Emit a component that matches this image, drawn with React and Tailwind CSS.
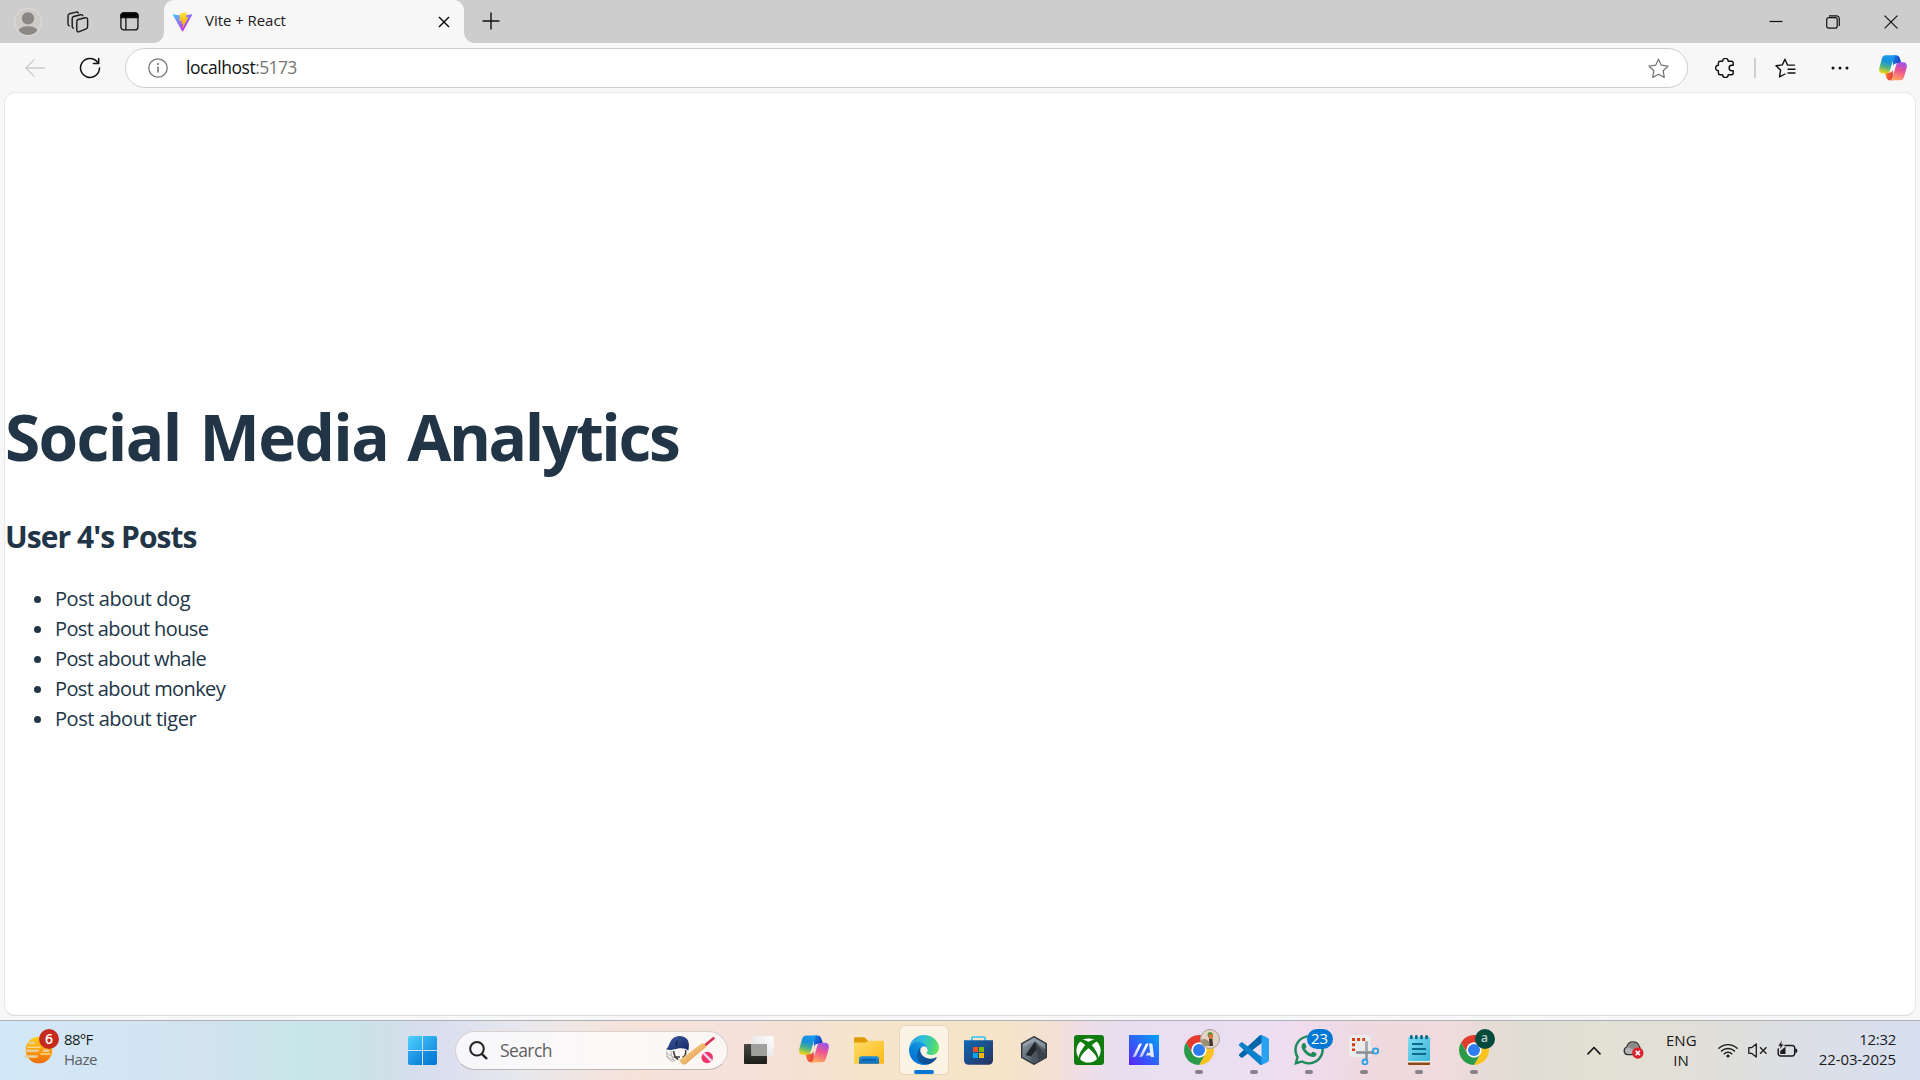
import React from 'react';
import { FaXbox, FaWhatsapp } from 'react-icons/fa';

/* ---------- shared logos ---------- */

function CopilotLogo({ id, className }) {
  const loop =
    'M7.200.4h11.600c-1.900.3-2.700 1.800-3.300 3.800l-3.700 12.200c-.8 2.500-2 3.400-4.200 3.400H4.200C1 19.800-.5 17.600.3 14L2.900 4.600C3.700 1.600 4.900.4 7.200.4z';
  return (
    <svg viewBox="0 0 30 28" className={className}>
      <defs>
        <linearGradient id={id + 'a'} x1="0.55" y1="0" x2="0.3" y2="1">
          <stop offset="0" stopColor="#1b9bee" />
          <stop offset="0.35" stopColor="#1690d8" />
          <stop offset="0.65" stopColor="#4db386" />
          <stop offset="1" stopColor="#f5d80c" />
        </linearGradient>
        <linearGradient id={id + 'b'} x1="0.3" y1="1" x2="0.6" y2="0">
          <stop offset="0" stopColor="#9a55ee" />
          <stop offset="0.45" stopColor="#ee5390" />
          <stop offset="1" stopColor="#ffa660" />
        </linearGradient>
        <linearGradient id={id + 'c'} x1="0" y1="0" x2="1" y2="0.6">
          <stop offset="0" stopColor="#1a86ee" />
          <stop offset="1" stopColor="#1238b8" />
        </linearGradient>
        <linearGradient id={id + 'd'} x1="0" y1="0" x2="1" y2="0.4">
          <stop offset="0" stopColor="#f8842c" />
          <stop offset="1" stopColor="#e8403f" />
        </linearGradient>
      </defs>
      <path d="M15 .4h3.200c2.500 0 3.700 1.300 4.400 3.900l1.400 4.500h-4.600c-2.600 0-3.600.9-4.400 3z" fill={`url(#${id}c)`} />
      <path d="M15 27.200h-3c-2.500 0-3.600-1.400-4.300-3.900l-1.300-4.200h4c2.600 0 3.600-1.200 4.300-3.200z" fill={`url(#${id}d)`} />
      <path d={loop} fill={`url(#${id}a)`} />
      <path transform="rotate(180 15 13.800)" d={loop} fill={`url(#${id}b)`} style={undefined} />
    </svg>
  );
}

function ViteLogo() {
  return (
    <svg viewBox="0 0 410 404" className="h-[20px] w-[21px]">
      <defs>
        <linearGradient id="va" x1="6" y1="33" x2="235" y2="344" gradientUnits="userSpaceOnUse">
          <stop stopColor="#41D1FF" />
          <stop offset="1" stopColor="#BD34FE" />
        </linearGradient>
        <linearGradient id="vb" x1="194.700" y1="8.800" x2="236" y2="293" gradientUnits="userSpaceOnUse">
          <stop stopColor="#FFEA83" />
          <stop offset="0.083" stopColor="#FFDD35" />
          <stop offset="1" stopColor="#FFA800" />
        </linearGradient>
      </defs>
      <path fill="url(#va)" d="M399.641 59.5246L215.643 388.545C211.844 395.338 202.084 395.378 198.228 388.618L10.5817 59.5563C6.38087 52.1896 12.6802 43.2665 21.0281 44.7586L205.223 77.6824C206.398 77.8924 207.601 77.8904 208.776 77.6763L389.119 44.8058C397.439 43.2894 403.768 52.1434 399.641 59.5246Z" />
      <path fill="url(#vb)" d="M292.965 1.5744L156.801 28.2552C154.563 28.6937 152.906 30.5903 152.771 32.8664L144.395 174.33C144.198 177.662 147.258 180.248 150.51 179.498L188.42 170.749C191.967 169.931 195.172 173.055 194.443 176.622L183.18 231.775C182.422 235.487 185.907 238.661 189.532 237.56L212.947 230.446C216.577 229.344 220.065 232.527 219.297 236.242L201.398 322.875C200.278 328.294 207.486 331.249 210.492 326.603L212.5 323.5L323.454 102.072C325.312 98.3645 322.108 94.137 318.036 94.9228L279.014 102.454C275.347 103.161 272.227 99.746 273.262 96.1583L298.731 7.86689C299.767 4.27314 296.636 .855181 292.965 1.5744Z" />
    </svg>
  );
}

/* ---------- browser chrome ---------- */

function TabStrip() {
  return (
    <div className="flex h-[43px] w-full items-center bg-[#cdcdcd]">
      <div className="ml-[14px] size-[28px] shrink-0 overflow-hidden rounded-full border border-[#e2dfdb] bg-[#cfcbc6]">
        <svg viewBox="0 0 27 27" className="-ml-px -mt-px size-[28px]">
          <circle cx="13.500" cy="10" r="6" fill="#8b8784" />
          <path d="M4.500 21.500c2.200-5.200 15.800-5.200 18 0-1.600 3.300-5.200 5-9 5s-7.400-1.700-9-5z" fill="#8b8784" />
        </svg>
      </div>
      <svg viewBox="0 0 22 22" className="ml-[25px] size-[22px] shrink-0" fill="none" stroke="#1a1a1a" strokeWidth="1.400" strokeLinejoin="round" strokeLinecap="round">
        <path d="M9.800 10.400c0-1 .5-1.600 1.400-1.900l7-1.800c1.400-.3 2.400.4 2.400 1.800v7.300c0 .9-.5 1.600-1.400 2l-6.900 2.900c-1.400.5-2.500-.2-2.500-1.600z" />
        <path d="M6.400 17.200c-.8-.3-1.200-.9-1.200-1.700V7.400c0-1 .5-1.600 1.400-1.900l7-1.800c1-.2 1.800.1 2.200.9" />
        <path d="M2.200 14.800c-.8-.3-1.200-.9-1.200-1.700V4.700c0-1 .5-1.600 1.400-1.900l6.700-1.700c1-.2 1.800.1 2.200.9" />
      </svg>
      <svg viewBox="0 0 19 19" className="ml-[31px] size-[19px] shrink-0" fill="none" stroke="#111" strokeWidth="1.300">
        <rect x="0.900" y="0.900" width="17" height="17" rx="3" />
        <path d="M.9 5.500V3.500a2.600 2.600 0 0 1 2.600-2.600h12a2.600 2.600 0 0 1 2.600 2.600v2z" fill="#050505" />
        <path d="M5.900 5.500V18" />
      </svg>

      <div className="relative ml-[25px] flex h-full w-[300px] shrink-0 items-center rounded-t-[10px] bg-[#f7f7f7]">
        <span className="absolute -left-[10px] bottom-0 size-[10px] bg-[radial-gradient(circle_at_0_0,transparent_9.5px,#f7f7f7_10px)]" />
        <span className="absolute -right-[10px] bottom-0 size-[10px] bg-[radial-gradient(circle_at_100%_0,transparent_9.5px,#f7f7f7_10px)]" />
        <div className="ml-[8px]"><ViteLogo /></div>
        <span className="-mt-[3px] ml-[12px] text-[15px] leading-[20px] tracking-[-0.05px] text-[#1b1b1b]">Vite + React</span>
        <svg viewBox="0 0 12 12" className="ml-auto mr-[14px] size-[12px]" stroke="#111" strokeWidth="1.500">
          <path d="M1 1l10 10M11 1L1 11" />
        </svg>
      </div>
      <svg viewBox="0 0 18 18" className="-mt-[1px] ml-[18px] size-[18px] shrink-0" stroke="#111" strokeWidth="1.400">
        <path d="M.5 9h17M9 .5v17" />
      </svg>

      <div className="ml-auto mr-[22px] flex items-center">
        <svg viewBox="0 0 14 14" className="size-[14px]" stroke="#111" strokeWidth="1.200">
          <path d="M.5 6.500h13" />
        </svg>
        <svg viewBox="0 0 14 14" className="ml-[43px] size-[14px]" fill="none" stroke="#111" strokeWidth="1.200">
          <rect x="0.700" y="2.700" width="10.500" height="10.500" rx="2" />
          <path d="M3 .9h7.400a2.900 2.900 0 0 1 2.900 2.900V11" />
        </svg>
        <svg viewBox="0 0 14 14" className="ml-[44px] size-[14px]" stroke="#111" strokeWidth="1.200">
          <path d="M.6.600l12.800 12.800M13.400.6L.6 13.400" />
        </svg>
      </div>
    </div>
  );
}

const STAR = 'M10 1.200l2.700 5.700 6.300.9-4.600 4.300 1.100 6.300L10 15.500l-5.500 2.900 1.100-6.300L1 7.800l6.300-.9z';

function Toolbar() {
  return (
    <div className="flex h-[49px] w-full items-center bg-[#f7f7f7] pt-px">
      <svg viewBox="0 0 20 18" className="ml-[25px] h-[18px] w-[20px] shrink-0" fill="none" stroke="#cbcbcb" strokeWidth="1.300" strokeLinecap="round" strokeLinejoin="round">
        <path d="M19.500 9H.8M9.300.6L.8 9l8.500 8.400" />
      </svg>
      <svg viewBox="0 0 22 22" className="ml-[34px] size-[22px] shrink-0" fill="none" stroke="#111" strokeWidth="1.500" strokeLinecap="round" strokeLinejoin="round">
        <path d="M18.600 5.200A9.500 9.500 0 1 0 20.500 11" />
        <path d="M19.700 1.400v5h-5.200" />
      </svg>
      <div className="ml-[24px] flex h-[40px] w-[1563px] shrink-0 items-center rounded-full border border-[#cfcfcf] bg-white">
        <svg viewBox="0 0 20 20" className="ml-[22px] size-[20px]" fill="none" stroke="#767676" strokeWidth="1.300">
          <circle cx="10" cy="10" r="9.200" />
          <path d="M10 8.600v5.800" strokeWidth="1.600" />
          <circle cx="10" cy="6" r="1.100" fill="#767676" stroke="none" />
        </svg>
        <span className="-mt-[3px] ml-[18px] text-[17.5px] leading-[24px] text-[#767676]">
          <span className="tracking-[-0.45px] text-[#111]">localhost</span>
          <span className="tracking-[-0.65px]">:5173</span>
        </span>
        <svg viewBox="0 0 20 20" className="ml-auto mr-[18px] size-[21px]" fill="none" stroke="#767676" strokeWidth="1.200" strokeLinejoin="round">
          <path d={STAR} />
        </svg>
      </div>
      <svg viewBox="0 0 20 20" className="ml-[27px] size-[20px] shrink-0" fill="none" stroke="#111" strokeWidth="1.400" strokeLinejoin="round">
        <path d="M3.400 5Q3.400 3.200 5.200 3.200H7.600A2.800 2.800 0 0 1 13.200 3.200H16.400Q18.200 3.200 18.200 5V7.300H16.800A2.700 2.700 0 0 0 16.800 12.700H18.200V15Q18.200 16.800 16.400 16.800H13.200A2.800 2.800 0 0 1 7.600 16.800H5.200Q3.400 16.800 3.400 15V12.800A2.800 2.800 0 0 1 3.400 7.200Z" />
      </svg>
      <span className="ml-[19px] h-[20px] w-[2px] shrink-0 bg-[#cfcfcf]" />
      <svg viewBox="0 0 21 20" className="ml-[19px] h-[20px] w-[21px] shrink-0" fill="none" stroke="#111" strokeWidth="1.400" strokeLinejoin="round" strokeLinecap="round">
        <path d="M12.500 7.100L10 1.200 7.300 6.900 1 7.800l4.600 4.300-1.100 6.700L10 16M12.500 7.100h7" />
        <path d="M13 11.200h7M13 15h7" />
      </svg>
      <svg viewBox="0 0 18 4" className="ml-[35px] h-[4px] w-[18px] shrink-0" fill="#111">
        <circle cx="2" cy="2" r="1.500" />
        <circle cx="9" cy="2" r="1.500" />
        <circle cx="16" cy="2" r="1.500" />
      </svg>
      <CopilotLogo id="cpTop" className="ml-[30px] h-[26px] w-[28px] shrink-0" />
    </div>
  );
}

/* ---------- page ---------- */

const posts = [
  ['Post about dog', 'tracking-[-0.42px]'],
  ['Post about house', 'tracking-[-0.62px]'],
  ['Post about whale', 'tracking-[-0.62px]'],
  ['Post about monkey', 'tracking-[-0.61px]'],
  ['Post about tiger', 'tracking-[-0.45px]'],
];

function Page() {
  return (
    <div className="h-[928px] w-full bg-[#f7f7f7] px-[4px] pb-[4px]">
      <main className="h-full rounded-[11px] border border-[#e8e8e8] border-b-[#dcdcdc] bg-[#fefefe] pt-[309px] text-[#213547]">
        <h1 className="h-[70px] whitespace-nowrap text-[64px] font-bold leading-[70px] tracking-[-1.65px] [word-spacing:4px]">
          Social Media <span className="tracking-[-2.4px]">Analytics</span>
        </h1>
        <h2 className="mt-[42px] whitespace-nowrap text-[30px] font-bold leading-[45px] tracking-[-0.95px]">User 4's Posts</h2>
        <ul className="mt-[25px]">
          {posts.map(([text, tracking]) => (
            <li key={text} className="flex h-[30px] items-center text-[20px] leading-[30px]">
              <span className="ml-[29px] mr-[14px] size-[7px] rounded-full bg-[#213547]" />
              <span className={tracking}>{text}</span>
            </li>
          ))}
        </ul>
      </main>
    </div>
  );
}

/* ---------- taskbar ---------- */

function WeatherIcon() {
  return (
    <svg viewBox="0 0 30 28" className="h-[28px] w-[30px]">
      <defs>
        <linearGradient id="sun" x1="0" y1="0" x2="0" y2="1">
          <stop offset="0" stopColor="#fdd015" />
          <stop offset="0.500" stopColor="#fb9f0f" />
          <stop offset="1" stopColor="#ee6a08" />
        </linearGradient>
      </defs>
      <circle cx="15" cy="14" r="13.300" fill="url(#sun)" />
      <g stroke="#e6cf9c" strokeWidth="2.600" strokeLinecap="round">
        <path d="M5.500 7h4.500M3.500 14.800h10M20 14.800h4M1.500 20.500h11" />
      </g>
      <g stroke="#f7d98f" strokeWidth="1.400" strokeLinecap="round">
        <path d="M4 11.300h12M17 18h9" />
      </g>
    </svg>
  );
}

function StartIcon() {
  return (
    <div className="grid size-[29px] shrink-0 grid-cols-2 grid-rows-2 gap-[1px] overflow-hidden rounded-[2px]">
      <span className="bg-gradient-to-br from-[#4fd0fb] to-[#27a9ee]" />
      <span className="bg-gradient-to-br from-[#35b7f3] to-[#1591e2]" />
      <span className="bg-gradient-to-br from-[#2ba7ee] to-[#0b80d8]" />
      <span className="bg-gradient-to-br from-[#1791e3] to-[#0676d2]" />
    </div>
  );
}

function CricketArt() {
  return (
    <svg viewBox="0 0 50 30" className="h-[30px] w-[50px]">
      <defs>
        <linearGradient id="helm" x1="0" y1="0" x2="1" y2="1">
          <stop offset="0" stopColor="#3d5da8" />
          <stop offset="1" stopColor="#16265c" />
        </linearGradient>
        <linearGradient id="bat" x1="0" y1="0" x2="1" y2="1">
          <stop offset="0.200" stopColor="#f9cf8c" />
          <stop offset="1" stopColor="#d98d3e" />
        </linearGradient>
      </defs>
      <g fill="none" stroke="#a9a7a8" strokeWidth="0.900">
        <path d="M2 16c-1 5 1 9 6 10.500M2 18.500l9 5M1.500 21.500l9 4.500M6 16c0 4 1.500 8 4 10M9 16c.5 4 2 6.500 5 9" />
      </g>
      <path d="M8.500 16c.5 4 2 7 4.500 8.500M20.500 15c1 4-.5 6-3 7.500M9 22h6" stroke="#3a3a3f" strokeWidth="1.500" fill="none" />
      <path d="M1 14.300C4.300 12 4 7 7.500 3.700c4.200-3.900 12-3.500 14.800.8 2 3 1.900 7 1 11.300-2.800-2.600-6.800-2.900-11.300-2-4 .9-7.500 2-11 .5z" fill="url(#helm)" />
      <path d="M12.500 6.200c-1.500 1-1.500 3-.5 4.500" stroke="#0f1a3c" strokeWidth="1.100" fill="none" />
      <path d="M14.300 25.200L36.500 8.600c1.500-1 5.100.8 5.300 2.800L21 29c-2 1-4.200.6-5.200-1.200z" fill="url(#bat)" />
      <path d="M41 9.500l7.500-6.300" stroke="#d8324f" strokeWidth="2.500" strokeLinecap="round" />
      <circle cx="42.200" cy="22.500" r="5.700" fill="#ee3568" />
      <path d="M37.800 19l7.700 8 2-1.800-8-7.800z" fill="#ead7f7" />
    </svg>
  );
}

function TaskViewIcon() {
  return (
    <svg viewBox="0 0 30 28" className="h-[28px] w-[30px]">
      <defs>
        <linearGradient id="tv1" x1="0" y1="0" x2="0" y2="1">
          <stop offset="0" stopColor="#484846" />
          <stop offset="1" stopColor="#1c1c1b" />
        </linearGradient>
        <linearGradient id="tv2" x1="1" y1="0" x2="0" y2="1">
          <stop offset="0" stopColor="#fff" />
          <stop offset="1" stopColor="#dadada" />
        </linearGradient>
      </defs>
      <rect x="0" y="8" width="23" height="20" rx="0.800" fill="url(#tv1)" />
      <rect x="7.500" y="0.300" width="22.300" height="19.700" rx="1.200" fill="url(#tv2)" />
      <rect x="7.500" y="8" width="15.500" height="12" fill="#9f9f9d" />
    </svg>
  );
}

function FolderIcon() {
  return (
    <svg viewBox="0 0 30 27" className="h-[27px] w-[30px]">
      <defs>
        <linearGradient id="fo" x1="0" y1="0" x2="1" y2="1">
          <stop offset="0" stopColor="#ffdc69" />
          <stop offset="1" stopColor="#fdb916" />
        </linearGradient>
        <linearGradient id="fob" x1="0" y1="0" x2="0" y2="1">
          <stop offset="0" stopColor="#1c8fe0" />
          <stop offset="1" stopColor="#0f6cbd" />
        </linearGradient>
      </defs>
      <path d="M0 1.800C0 1 .6.300 1.500.300h8c.8 0 1.300.2 1.900.8L14 3.500v4H0z" fill="#df9a06" />
      <path d="M0 5.600h10.200c1 0 1.600-.2 2.300-.9l1.100-1H29c.6 0 1 .4 1 1v21c0 .6-.4 1-1 1H1c-.6 0-1-.4-1-1z" fill="url(#fo)" />
      <path d="M5 26.700v-4.500A2.900 2.900 0 0 1 7.900 19.300h14.200A2.900 2.900 0 0 1 25 22.200v4.500z" fill="url(#fob)" />
      <path d="M8 22.800h14" stroke="#0b4f92" strokeWidth="1.200" />
    </svg>
  );
}

function EdgeIcon() {
  return (
    <svg viewBox="0 0 256 256" className="size-[30px]">
      <defs>
        <linearGradient id="ea" x1="63" y1="178" x2="241" y2="178" gradientUnits="userSpaceOnUse">
          <stop offset="0" stopColor="#0c59a4" />
          <stop offset="1" stopColor="#114a8b" />
        </linearGradient>
        <linearGradient id="eb" x1="157" y1="95" x2="46" y2="216" gradientUnits="userSpaceOnUse">
          <stop offset="0" stopColor="#1b9de2" />
          <stop offset="0.200" stopColor="#1595df" />
          <stop offset="0.700" stopColor="#0680d7" />
          <stop offset="1" stopColor="#0078d4" />
        </linearGradient>
        <linearGradient id="ec" x1="10" y1="60" x2="250" y2="120" gradientUnits="userSpaceOnUse">
          <stop offset="0" stopColor="#2f9fe2" />
          <stop offset="0.400" stopColor="#2fc0d8" />
          <stop offset="0.700" stopColor="#3fcf9a" />
          <stop offset="1" stopColor="#66e45a" />
        </linearGradient>
      </defs>
      <path fill="url(#ea)" d="M231 190.500c-3.400 1.800-6.900 3.400-10.500 4.700a101.600 101.600 0 0 1-35.900 6.400c-47.300 0-88.500-32.500-88.500-74.300a31.500 31.500 0 0 1 16.400-27.300c-42.800 1.800-53.800 46.400-53.800 72.500 0 74 68.100 81.400 82.800 81.400 7.900 0 19.800-2.300 27-4.600l1.300-.4a128.300 128.300 0 0 0 66.600-52.800 4 4 0 0 0-5.400-5.600z" />
      <path fill="url(#eb)" d="M105.700 241.400A79.200 79.200 0 0 1 83 220.100a80.700 80.700 0 0 1 29.500-120c3.200-1.500 8.500-4.100 15.600-4a32.400 32.400 0 0 1 25.700 13 31.900 31.900 0 0 1 6.300 18.700c0-.2 24.500-79.600-80-79.600-43.900 0-80 41.700-80 78.200a130.200 130.200 0 0 0 12.100 56 128 128 0 0 0 156.400 67 75.500 75.500 0 0 1-62.800-8z" />
      <path fill="url(#ec)" d="M152.300 148.900c-.9 1-3.400 2.500-3.400 5.600 0 2.600 1.700 5.200 4.800 7.300 14.300 10 41.400 8.600 41.500 8.600a59.600 59.600 0 0 0 30.300-8.300 61.400 61.400 0 0 0 30.400-52.900c.3-22.400-8-37.300-11.300-43.900C223.500 23.900 177.700 0 128 0A128 128 0 0 0 0 126.200c.5-36.500 36.800-66 80-66 3.500 0 23.500.3 42 10a72.600 72.600 0 0 1 30.900 29.300c6.100 10.600 7.200 24.100 7.200 29.500s-2.700 13.300-7.800 19.900z" />
    </svg>
  );
}

function StoreIcon() {
  return (
    <svg viewBox="0 0 29 29" className="size-[29px]">
      <defs>
        <linearGradient id="st" x1="0" y1="0" x2="1" y2="1">
          <stop offset="0" stopColor="#0f6ab4" />
          <stop offset="1" stopColor="#27305f" />
        </linearGradient>
      </defs>
      <path d="M7.900 5V2.200c0-.7.400-1.200 1.200-1.200h10.800c.8 0 1.200.5 1.200 1.200V5" fill="none" stroke="#2fc4f4" strokeWidth="1.700" />
      <path d="M0 4.200h29v20a4.600 4.600 0 0 1-4.600 4.600H4.600A4.600 4.600 0 0 1 0 24.200z" fill="url(#st)" />
      <rect x="9" y="11" width="5" height="5" fill="#f25022" />
      <rect x="15" y="11" width="5" height="5" fill="#7fba00" />
      <rect x="9" y="17" width="5" height="5" fill="#00a4ef" />
      <rect x="15" y="17" width="5" height="5" fill="#ffb900" />
    </svg>
  );
}

function ArmouryIcon() {
  return (
    <svg viewBox="0 0 26 29" className="h-[29px] w-[26px]">
      <defs>
        <linearGradient id="ar" x1="0" y1="0" x2="1" y2="1">
          <stop offset="0" stopColor="#8595a2" />
          <stop offset="0.500" stopColor="#66727d" />
          <stop offset="1" stopColor="#2c3238" />
        </linearGradient>
      </defs>
      <path d="M13 .7l12.300 7v13.600L13 28.300.7 21.300V7.700z" fill="url(#ar)" stroke="#30373e" strokeWidth="1.400" />
      <path d="M14 5.500L4.500 19l5.500 1.500 5.500-6.500 2 8.500 6-4z" fill="#22262b" />
      <path d="M10 20.500l5.500-6.500 1.700 8-4 5z" fill="#4d565f" />
      <path d="M13 1.800L24.200 8v5L14 5.500 2 11V8z" fill="#b7c2cb" opacity="0.450" />
      <path d="M14 5.500l9.500 13 .8 2L17.500 24z" fill="#3a4148" />
    </svg>
  );
}

function XboxIcon() {
  return (
    <div className="flex size-[30px] items-center justify-center rounded-[3px] bg-[#107c10]">
      <FaXbox className="size-[25px] text-white" />
    </div>
  );
}

function MyAsusIcon() {
  return (
    <svg viewBox="0 0 30 30" className="size-[30px]">
      <defs>
        <linearGradient id="as" x1="0" y1="1" x2="1" y2="0">
          <stop offset="0" stopColor="#5a22f5" />
          <stop offset="0.500" stopColor="#2f63fb" />
          <stop offset="1" stopColor="#00a4fb" />
        </linearGradient>
        <linearGradient id="asw" x1="0" y1="1" x2="1" y2="0">
          <stop offset="0" stopColor="#a9b4fb" />
          <stop offset="0.700" stopColor="#fff" />
        </linearGradient>
      </defs>
      <rect width="30" height="30" fill="url(#as)" />
      <path d="M3.500 22L9.800 9.500a2 2 0 0 1 1.700-1h1.500L7 21a2 2 0 0 1-1.700 1z" fill="url(#asw)" />
      <path d="M10.200 22L16.500 9.500a2 2 0 0 1 1.700-1h1.500L13.700 21A2 2 0 0 1 12 22z" fill="url(#asw)" />
      <path d="M20 8.500h2c1 0 1.400.5 1.600 1.300L25 22h-3.200l-.2-1.500h-4.800l1.600-2.800h2.800l-.7-5z" fill="#e7ebfe" />
    </svg>
  );
}

function ChromeIcon() {
  return (
    <svg viewBox="0 0 48 48" className="size-[30px]">
      <path d="M24 12H44.780A24 24 0 0 0 3.220 12L13.600 30A12 12 0 0 1 24 12z" fill="#e33b2e" />
      <path d="M24 12H44.780A24 24 0 0 1 24 48L34.390 30A12 12 0 0 0 24 12z" fill="#fcc31e" />
      <path d="M34.390 30L24 48A24 24 0 0 1 3.220 12L13.600 30A12 12 0 0 0 34.390 30z" fill="#2a9b48" />
      <circle cx="24" cy="24" r="12" fill="#fff" />
      <circle cx="24" cy="24" r="9.600" fill="#2f7cf0" />
    </svg>
  );
}

function VsCodeIcon() {
  const arm =
    'M96.4614 10.7962L75.8569.875542C73.4719-.272773 70.6217.211611 68.75 2.08333L1.29858 63.5832C-.515693 65.2373-.513607 68.0937 1.30308 69.7452L6.81272 74.754C8.29793 76.1042 10.5347 76.2036 12.1338 74.9905L93.3609 13.3699C96.086 11.3026 100 13.2462 100 16.6667V16.4275C100 14.0265 98.6246 11.8378 96.4614 10.7962Z';
  return (
    <svg viewBox="0 0 100 100" className="size-[30px]">
      <path d={arm} fill="#0065a9" />
      <path d={arm} transform="matrix(1 0 0 -1 0 100)" fill="#0a7fca" />
      <path fill="#27a2f0" d="M75.8578 99.1263C73.4721 100.274 70.6219 99.7885 68.75 97.9166C71.0564 100.223 75 98.5895 75 95.3278V4.67213C75 1.41039 71.0564-.223106 68.75 2.08329C70.6219.211402 73.4721-.273666 75.8578.873633L96.4587 10.7807C98.6234 11.8217 100 14.0112 100 16.4132V83.5871C100 85.9891 98.6234 88.1786 96.4586 89.2196L75.8578 99.1263Z" />
    </svg>
  );
}

function SnipIcon() {
  return (
    <svg viewBox="0 0 30 30" className="size-[30px]">
      <rect x="0" y="0" width="22" height="22" rx="2" fill="#ebebeb" />
      <path d="M4.500 16V4.500H16" fill="none" stroke="#d83b12" strokeWidth="3" strokeDasharray="3 2.200" strokeDashoffset="0.500" />
      <path d="M7 17.500h17M17.500 6.500V24" stroke="#868b90" strokeWidth="2.400" />
      <path d="M17.500 6.500V17" stroke="#a9adb1" strokeWidth="2" />
      <circle cx="26.500" cy="16" r="2.700" fill="none" stroke="#2b9fe6" strokeWidth="1.800" />
      <circle cx="16" cy="27" r="2.500" fill="none" stroke="#2b9fe6" strokeWidth="1.800" />
    </svg>
  );
}

function NotepadIcon() {
  return (
    <svg viewBox="0 0 22 30" className="h-[30px] w-[22px]">
      <defs>
        <linearGradient id="np" x1="0" y1="0" x2="1" y2="1">
          <stop offset="0" stopColor="#7fdcf2" />
          <stop offset="1" stopColor="#39b5d8" />
        </linearGradient>
      </defs>
      <rect x="0" y="24" width="22" height="6" rx="1" fill="#8f4a12" />
      <rect x="0" y="24" width="22" height="3.500" fill="#f4efe8" />
      <rect x="0" y="2" width="22" height="24" rx="1" fill="url(#np)" />
      <g fill="#0f6280">
        <rect x="2" y="0" width="2.600" height="4.200" rx="1.200" />
        <rect x="7" y="0" width="2.600" height="4.200" rx="1.200" />
        <rect x="12.200" y="0" width="2.600" height="4.200" rx="1.200" />
        <rect x="17.300" y="0" width="2.600" height="4.200" rx="1.200" />
      </g>
      <path d="M4 9h11M4 14h14M4 19h14" stroke="#0c6a8c" strokeWidth="1.800" />
    </svg>
  );
}

function AppCell({ children, running, active }) {
  return (
    <div className="flex w-[55px] shrink-0 justify-center">
      <div
        className={
          active
            ? 'relative flex h-[48px] w-[48px] items-center justify-center rounded-[5px] bg-[#fcf3e5] shadow-[0_0_1px_1px_rgba(190,170,130,0.25)]'
            : 'relative flex h-[48px] w-[48px] items-center justify-center'
        }
      >
        {children}
        {running && <span className="absolute bottom-0 left-[20px] h-[4px] w-[8px] rounded-full bg-[#87828a]" />}
        {active && <span className="absolute bottom-0 left-[14px] h-[4px] w-[20px] rounded-full bg-[#0078d4]" />}
      </div>
    </div>
  );
}

function Taskbar() {
  return (
    <footer className="flex h-[60px] w-full items-center border-t border-[#aeb2b6] bg-[linear-gradient(90deg,#d3e8f8_0px,#d2e3ef_200px,#c8e6e9_300px,#c9e3e8_350px,#d0dfe9_390px,#dcdfee_450px,#e7e8ee_520px,#f1e6e1_580px,#f6e2d9_640px,#f5e2dc_740px,#f5e1d3_800px,#f6e5cc_860px,#f6e4c8_1000px,#f4e0d2_1050px,#efdde6_1080px,#e7dff0_1120px,#ebdff1_1250px,#efdcef_1300px,#eed9e0_1360px,#efdbdc_1450px,#e6dcd6_1490px,#dfded2_1530px,#e3e0d4_1600px,#e1dfd8_1700px,#dcdfe6_1800px,#d7dff0_1920px)]">
      <div className="flex w-[408px] shrink-0 items-center">
        <div className="relative -mt-[2px] ml-[24px]">
          <WeatherIcon />
          <span className="absolute -top-[7px] left-[15px] flex size-[20px] items-center justify-center rounded-full bg-[#c42b1c] text-[14px] font-semibold leading-[20px] text-white">6</span>
        </div>
        <div className="-mt-[3px] ml-[10px] text-[15px] leading-[20px]">
          <div className="tracking-[-0.7px] text-[#1b1b1b]">88°F</div>
          <div className="tracking-[-0.45px] text-[#5c6165]">Haze</div>
        </div>
      </div>

      <StartIcon />
      <div className="-mt-px ml-[18px] flex h-[39px] w-[273px] shrink-0 items-center rounded-full border border-[#d9d0d0] border-b-[#bdb6b6] bg-[linear-gradient(90deg,#f7f7fb_0%,#fcf9f7_60%,#fbf6f3_100%)]">
        <svg viewBox="0 0 19 19" className="ml-[13px] size-[19px]" fill="none" stroke="#222" strokeWidth="2">
          <circle cx="8" cy="7.800" r="6.800" />
          <path d="M12.800 12.800l5.200 5.200" strokeWidth="2.400" />
        </svg>
        <span className="ml-[12px] text-[17.5px] leading-[24px] tracking-[-0.6px] text-[#5f5f5f]">Search</span>
        <div className="ml-auto mr-[12px]"><CricketArt /></div>
      </div>

      <div className="ml-[3px] flex h-full items-center pb-px">
        <AppCell><TaskViewIcon /></AppCell>
        <AppCell><CopilotLogo id="cpBar" className="-mt-[2px] h-[28px] w-[30px]" /></AppCell>
        <AppCell><FolderIcon /></AppCell>
        <AppCell active><EdgeIcon /></AppCell>
        <AppCell><StoreIcon /></AppCell>
        <AppCell><ArmouryIcon /></AppCell>
        <AppCell><XboxIcon /></AppCell>
        <AppCell><MyAsusIcon /></AppCell>
        <AppCell running>
          <ChromeIcon />
          <span className="absolute left-[25px] top-[3px] flex size-[20px] items-center justify-center overflow-hidden rounded-full border border-[#a99f98] bg-[#e3d3c6]">
            <svg viewBox="0 0 18 18" className="size-[18px]">
              <path d="M0 10c4-2 8-1 9 6H0z" fill="#9a8f72" />
              <path d="M6.500 5c0-4 5-4 5.500 0l-.5 3-4-.5z" fill="#5d8c3e" />
              <path d="M7.500 4.500h4v5h-3.500z" fill="#d9703a" />
              <path d="M8 9h3.500l.5 7H8.500z" fill="#3b3733" />
            </svg>
          </span>
        </AppCell>
        <AppCell running><VsCodeIcon /></AppCell>
        <AppCell running>
          <FaWhatsapp className="size-[34px] shrink-0 text-[#1f8a5b]" />
          <span className="absolute left-[22px] top-[3px] flex h-[20px] w-[26px] items-center justify-center rounded-full bg-[#0078d4] pb-px text-[15px] leading-[19px] tracking-[-0.2px] text-white">23</span>
        </AppCell>
        <AppCell running><SnipIcon /></AppCell>
        <AppCell running><NotepadIcon /></AppCell>
        <AppCell running>
          <ChromeIcon />
          <span className="absolute left-[25px] top-[3px] flex size-[20px] items-center justify-center rounded-full bg-[#064a3d] pb-[2px] text-[12px] font-semibold leading-[18px] text-[#b9d3cb]">a</span>
        </AppCell>
      </div>

      <div className="ml-auto mr-[24px] flex h-full items-center pb-px">
        <svg viewBox="0 0 14 9" className="h-[9px] w-[14px]" fill="none" stroke="#1b1b1b" strokeWidth="1.700" strokeLinecap="round" strokeLinejoin="round">
          <path d="M1 7.800L7 1.500l6 6.300" />
        </svg>
        <svg viewBox="0 0 21 18" className="ml-[22px] h-[18px] w-[21px]">
          <path d="M4.500 13.700A4 4 0 0 1 3.800 6C4.500 2.700 7.200.9 10 .9c2.700 0 4.900 1.300 5.900 3.700L17 7l-6 6.700z" fill="#b3b3b3" stroke="#333" strokeWidth="1.300" />
          <path d="M4.500 5.500C6 2.500 8 1.500 10 1.500c2.700 0 4.600 1.300 5.400 3.500l-6 3.500z" fill="#8a8a8a" />
          <circle cx="14.800" cy="12" r="5.700" fill="#d9222f" />
          <path d="M12.700 9.900l4.200 4.200M16.900 9.900l-4.200 4.200" stroke="#fff" strokeWidth="1.500" />
        </svg>
        <div className="-mt-px ml-[22px] w-[30px] text-center text-[15px] leading-[20px] text-[#1b1b1b]">
          <div>ENG</div>
          <div>IN</div>
        </div>
        <svg viewBox="0 0 20 15" className="ml-[22px] h-[15px] w-[20px]" fill="none" stroke="#1b1b1b" strokeWidth="1.400" strokeLinecap="round">
          <path d="M.9 5.300a13 13 0 0 1 18.200 0M3.500 8.100a9.300 9.300 0 0 1 13 0M6.200 10.800a5.400 5.400 0 0 1 7.600 0" />
          <circle cx="10" cy="13" r="1.600" fill="#1b1b1b" stroke="none" />
        </svg>
        <svg viewBox="0 0 20 15" className="ml-[10px] h-[15px] w-[20px]" fill="none" stroke="#1b1b1b" strokeWidth="1.300" strokeLinejoin="round">
          <path d="M.8 4.700h2.700L8.300.900v13.200L3.500 10.300H.8z" />
          <path d="M12 4.200l6.500 6.600M18.500 4.200L12 10.800" />
        </svg>
        <svg viewBox="0 0 21 18" className="-mt-[3px] ml-[9px] h-[18px] w-[21px]">
          <path d="M7.500 5.500h7.800a2.400 2.400 0 0 1 2.400 2.400v5.600a2.400 2.400 0 0 1-2.400 2.400H3.600a2.400 2.400 0 0 1-2.400-2.400V8.500" fill="none" stroke="#1b1b1b" strokeWidth="1.500" />
          <path d="M18.200 8.700h.8c.9 0 1.300.6 1.300 2s-.4 2-1.300 2h-.8z" fill="#1b1b1b" />
          <path d="M3.200 14v-3l5.300-4.200V14z" fill="#1b1b1b" />
          <path d="M5 0L1 6.200h2.500L2.300 10 7 4.200H4.500z" fill="#1b1b1b" stroke="#e1e1de" strokeWidth="0.400" />
        </svg>
        <div className="-mt-[2px] ml-[20px] w-[78px] whitespace-nowrap text-right text-[15px] leading-[20px] text-[#1b1b1b]">
          <div className="tracking-[-0.3px]">12:32</div>
          <div className="tracking-[-0.1px]">22-03-2025</div>
        </div>
      </div>
    </footer>
  );
}

export default function App() {
  return (
    <div className="flex h-[1080px] w-[1920px] flex-col overflow-hidden bg-[#f7f7f7] font-['Open_Sans','Noto_Sans',sans-serif]">
      <TabStrip />
      <Toolbar />
      <Page />
      <Taskbar />
    </div>
  );
}
